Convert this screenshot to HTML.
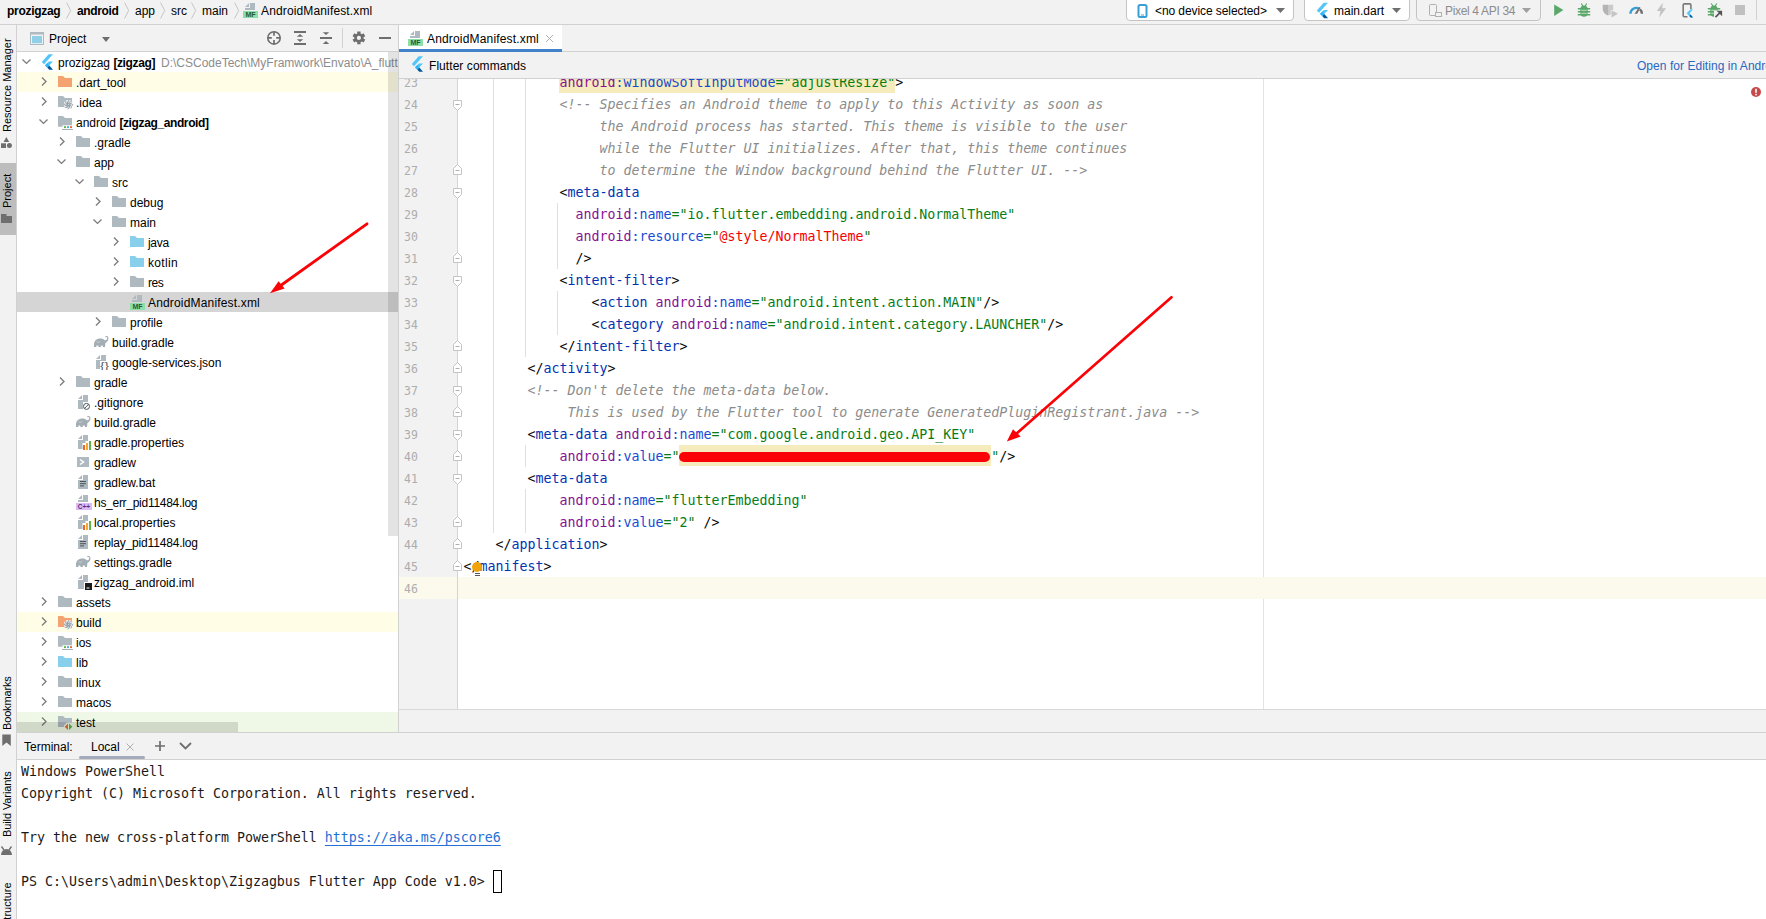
<!DOCTYPE html><html><head><meta charset="utf-8"><title>AndroidManifest.xml</title><style>
*{box-sizing:border-box}
html,body{margin:0;padding:0}
body{width:1766px;height:919px;overflow:hidden;position:relative;background:#fff;font-family:"Liberation Sans", sans-serif;font-size:12px;color:#000}
.abs{position:absolute}
.t{position:absolute;white-space:pre;line-height:20px;height:20px}
b{letter-spacing:-0.38px}
#nav{left:0;top:0;width:1766px;height:25px;background:#f2f2f2;border-bottom:1px solid #d1d1d1}
#strip{left:0;top:25px;width:17px;height:894px;background:#f2f2f2;border-right:1px solid #d1d1d1}
#phead{left:17px;top:25px;width:382px;height:27px;background:#f2f2f2;border-bottom:1px solid #d1d1d1}
#tree{left:17px;top:52px;width:381px;height:680px;background:#fff;overflow:hidden}
.row{position:absolute;left:0;width:381px;height:20px}
.row .t{top:1px}
.ic{position:absolute;width:16px;height:16px;top:2px}
.vt{position:absolute;white-space:pre;transform-origin:0 0;transform:rotate(-90deg);line-height:16px;height:16px;font-size:11px}
#ed{left:399px;top:25px;width:1367px;height:707px;background:#fff}
.code{position:absolute;white-space:pre;font-family:"DejaVu Sans Mono", "Liberation Mono", monospace;font-size:13.29px;line-height:22px;height:22px}
.ln{position:absolute;left:0;width:30px;font-family:"DejaVu Sans Mono", "Liberation Mono", monospace;font-size:11.500px;line-height:22px;height:22px;color:#adadad;text-align:left}
.tg{color:#0033b3} .ns{color:#871094} .an{color:#174ad4} .av{color:#067d17} .cm{color:#8c8c8c;font-style:italic} .br{color:#080808} .er{color:#f50000}
</style></head><body><div id="nav" class="abs">
<span class="t" style="left:7px;top:1px;font-weight:bold;letter-spacing:-0.3px">prozigzag</span>
<svg class="abs" style="left:66px;top:2px" width="6" height="17" viewBox="0 0 6 17"><path d="M0.500 0.500L4.700 8.500L0.500 16.500" fill="none" stroke="#c6c6c6" stroke-width="1"/></svg>
<span class="t" style="left:77px;top:1px;font-weight:bold;letter-spacing:-0.35px">android</span>
<svg class="abs" style="left:124px;top:2px" width="6" height="17" viewBox="0 0 6 17"><path d="M0.500 0.500L4.700 8.500L0.500 16.500" fill="none" stroke="#c6c6c6" stroke-width="1"/></svg>
<span class="t" style="left:135px;top:1px">app</span>
<svg class="abs" style="left:160px;top:2px" width="6" height="17" viewBox="0 0 6 17"><path d="M0.500 0.500L4.700 8.500L0.500 16.500" fill="none" stroke="#c6c6c6" stroke-width="1"/></svg>
<span class="t" style="left:171px;top:1px">src</span>
<svg class="abs" style="left:191px;top:2px" width="6" height="17" viewBox="0 0 6 17"><path d="M0.500 0.500L4.700 8.500L0.500 16.500" fill="none" stroke="#c6c6c6" stroke-width="1"/></svg>
<span class="t" style="left:202px;top:1px">main</span>
<svg class="abs" style="left:234px;top:2px" width="6" height="17" viewBox="0 0 6 17"><path d="M0.500 0.500L4.700 8.500L0.500 16.500" fill="none" stroke="#c6c6c6" stroke-width="1"/></svg>
<svg class="ic" style="left:243px;top:2px" viewBox="0 0 16 16"><path d="M7 1h5v7H2V6h5z M6 1L2 5h4z" fill="#aeb9c0"/><rect x="0" y="9" width="15" height="7" fill="#8fdeaa"/><text x="7.500" y="15.200" font-family="Liberation Sans, sans-serif" font-size="7" font-weight="bold" text-anchor="middle" fill="#1f5c36">MF</text></svg>
<span class="t" style="left:261px;top:1px;letter-spacing:0.14px">AndroidManifest.xml</span>
<div class="abs" style="left:1126px;top:-4px;width:168px;height:25px;background:#fff;border:1px solid #c4c4c4;border-radius:4px"></div>
<svg class="abs" style="left:1135px;top:3px" width="16" height="16" viewBox="0 0 16 16"><rect x="3.500" y="2" width="8" height="12" rx="1.500" fill="#fff" stroke="#389fd6" stroke-width="2"/><rect x="6" y="11.500" width="3" height="1" fill="#389fd6"/></svg>
<span class="t" style="left:1155px;top:1px;letter-spacing:-0.08px">&lt;no device selected&gt;</span>
<svg class="abs" style="left:1276px;top:8px" width="9" height="5" viewBox="0 0 9 5"><path d="M0 0h9L4.500 5z" fill="#6e6e6e"/></svg>
<div class="abs" style="left:1304px;top:-4px;width:106px;height:25px;background:#fff;border:1px solid #c4c4c4;border-radius:4px"></div>
<svg class="abs" width="16" height="17" style="left:1314px;top:2px" viewBox="0 0 16 16"><path d="M9.700 .2H14L5 10.200 2.800 7.900z" fill="#54c5f8"/><path d="M9.700 7.400H14L8.200 13.600 6 11.400z" fill="#54c5f8"/><path d="M8.200 13.600l2 2.200H14l-3.700-4.400z" fill="#01579b"/><path d="M6 11.400l2.200-2.300 2.100 2.300-2.100 2.200z" fill="#29b6f6"/></svg>
<span class="t" style="left:1334px;top:1px">main.dart</span>
<svg class="abs" style="left:1392px;top:8px" width="9" height="5" viewBox="0 0 9 5"><path d="M0 0h9L4.500 5z" fill="#6e6e6e"/></svg>
<div class="abs" style="left:1416px;top:-4px;width:125px;height:25px;background:#f2f2f2;border:1px solid #c4c4c4;border-radius:4px"></div>
<svg class="abs" style="left:1427px;top:2px" width="16" height="16" viewBox="0 0 16 16"><rect x="2.500" y="2.500" width="7" height="11" rx="1" fill="none" stroke="#b0b0b0" stroke-width="1"/><rect x="8.500" y="10.500" width="6" height="4" fill="#f2f2f2" stroke="#b0b0b0" stroke-width="1"/></svg>
<span class="t" style="left:1445px;top:1px;color:#8c8c8c;letter-spacing:-0.33px">Pixel 4 API 34</span>
<svg class="abs" style="left:1522px;top:8px" width="9" height="5" viewBox="0 0 9 5"><path d="M0 0h9L4.500 5z" fill="#a0a0a0"/></svg>
<svg class="abs" style="left:1550px;top:2px;overflow:visible" width="16" height="16" viewBox="0 0 16 16"><path d="M4.200 2.400L13.400 8.100L4.200 13.900z" fill="#59a869"/></svg>
<svg class="abs" style="left:1576px;top:2px;overflow:visible" width="16" height="16" viewBox="0 0 16 16"><path d="M5.200 1.500l1.700 2.500M10.800 1.500L9.100 4" stroke="#59a869" stroke-width="1.200" fill="none"/><path d="M1.800 6.800h12.400M1.800 9.800h12.400M1.800 12.800h12.400" stroke="#59a869" stroke-width="1.500" fill="none"/><path d="M4.300 7.300a3.700 3.900 0 0 1 7.400 0v3.500a3.700 3.900 0 0 1-7.400 0z" fill="#59a869"/><path d="M5.300 8.300h5.400M5.300 11.300h5.400" stroke="#d4ead8" stroke-width=".8" fill="none"/></svg>
<svg class="abs" style="left:1602px;top:2px;overflow:visible" width="16" height="16" viewBox="0 0 16 16"><path d="M.7 2.700h5.300v10.900C3 12.300.7 10 .7 7z" fill="#b4b4b4"/><path d="M6 2.700h5.200V8H8.800v4.600c-.9.500-1.800.8-2.800 1z" fill="#cacaca"/><path d="M9.500 8.300l6.500 3.500-6.500 3.600z" fill="#c4c4c4"/></svg>
<svg class="abs" style="left:1628px;top:2px;overflow:visible" width="16" height="16" viewBox="0 0 16 16"><path d="M1.200 11.700a7 7 0 0 1 10.500-6l-1.200 2a4.600 4.600 0 0 0-6.900 4z" fill="#389fd6"/><path d="M12.800 6.500a7 7 0 0 1 2.300 5.200h-2.400a4.600 4.600 0 0 0-1.500-3.400z" fill="#6e6e6e"/><path d="M6.500 11.700L11.300 5l1.200.8-3.300 5.900z" fill="#6e6e6e"/></svg>
<svg class="abs" style="left:1654px;top:2px;overflow:visible" width="16" height="16" viewBox="0 0 16 16"><path d="M8.800 .7L2.800 9h3.700l-1.500 6.400L12.200 6.300H8.200z" fill="#c4c4c4"/></svg>
<svg class="abs" style="left:1680px;top:2px;overflow:visible" width="16" height="16" viewBox="0 0 16 16"><path d="M10.900 7V2.900a1 1 0 0 0-1-1H4.200a1 1 0 0 0-1 1v10.800a1 1 0 0 0 1 1h3.300" fill="none" stroke="#7a7a7a" stroke-width="1.600"/><path d="M10.600 7.300L6.700 11.200l3.900 4.400h2.400l-2.300-2.800L13 10.500 10.900 12.400 9.600 11.200 13 7.300z" fill="#54c5f8"/><path d="M9.300 13.900l1.500 1.700H13l-2.300-2.800z" fill="#01579b"/></svg>
<svg class="abs" style="left:1706px;top:2px;overflow:visible" width="16" height="16" viewBox="0 0 16 16"><path d="M5.200 1.500l1.700 2.500M10.800 1.500L9.100 4" stroke="#59a869" stroke-width="1.200" fill="none"/><path d="M1.800 6.800h12.400M1.800 9.800h12.400M1.800 12.800h12.400" stroke="#59a869" stroke-width="1.500" fill="none"/><path d="M4.300 7.300a3.700 3.900 0 0 1 7.400 0v3.500a3.700 3.900 0 0 1-7.400 0z" fill="#59a869"/><path d="M5.300 8.300h5.400M5.300 11.300h5.400" stroke="#d4ead8" stroke-width=".8" fill="none"/><path d="M8 8.600h9v8H8z" fill="#f2f2f2"/><path d="M9.500 15.200l5.300-5.300" stroke="#555" stroke-width="1.700" fill="none"/><path d="M10.600 8.800h5.500v5.500z" fill="#555"/></svg>
<svg class="abs" style="left:1732px;top:2px;overflow:visible" width="16" height="16" viewBox="0 0 16 16"><rect x="3" y="3" width="10" height="10" fill="#c0c0c0"/></svg>
<div class="abs" style="left:1756px;top:0;width:1px;height:20px;background:#d1d1d1"></div>
</div>
<div id="strip" class="abs"></div>
<div class="abs" style="left:0;top:163px;width:16px;height:72px;background:#bdbdbd"></div>
<span class="vt" style="left:-1px;top:132px;letter-spacing:0px">Resource Manager</span>
<span class="vt" style="left:-1px;top:208px;letter-spacing:0px">Project</span>
<span class="vt" style="left:-1px;top:730px;letter-spacing:-0.15px">Bookmarks</span>
<span class="vt" style="left:-1px;top:837px;letter-spacing:-0.1px">Build Variants</span>
<span class="vt" style="left:-1px;top:927px;letter-spacing:0px">Structure</span>
<svg class="abs" style="left:0px;top:136px" width="16" height="14" viewBox="0 0 16 14"><path d="M6.400 1L9.200 6H3.600z" fill="#6e6e6e"/><rect x="1" y="7.300" width="5" height="4.700" fill="#6e6e6e"/><circle cx="9.400" cy="9.600" r="2.500" fill="#6e6e6e"/></svg>
<svg class="abs" style="left:0px;top:212px" width="16" height="14" viewBox="0 0 16 14"><path d="M1 2h5.500v2H12v7H1z" fill="#6e6e6e"/></svg>
<svg class="abs" style="left:0px;top:733px" width="16" height="14" viewBox="0 0 16 14"><path d="M2.300 1.500h8.500v11.500L6.500 9.500 2.300 13z" fill="#6e6e6e"/></svg>
<svg class="abs" style="left:0px;top:843px" width="16" height="14" viewBox="0 0 16 14"><path d="M1 12a5.500 6 0 0 1 11 0z" fill="#6e6e6e"/><path d="M1.500 3.500l2.500 3.500M11.500 3.500l-2.500 3.500" stroke="#6e6e6e" stroke-width="1.300"/></svg>
<div id="phead" class="abs">
<svg class="abs" style="left:13px;top:7px" width="14" height="14" viewBox="0 0 14 14"><rect x=".5" y=".5" width="13" height="12" fill="#f2f2f2" stroke="#aeb9c0"/><rect x="0" y="0" width="14" height="2.500" fill="#aeb9c0"/><rect x="2" y="4" width="10" height="7.200" fill="#8fcfe8"/></svg>
<span class="t" style="left:32px;top:4px">Project</span>
<svg class="abs" style="left:85px;top:12px" width="8" height="5" viewBox="0 0 8 5"><path d="M0 0h8L4 5z" fill="#6e6e6e"/></svg>
<svg class="abs" style="left:0;top:0" width="382" height="27" viewBox="0 0 382 27"><circle cx="257" cy="12.900" r="6.200" fill="none" stroke="#6e6e6e" stroke-width="1.600"/><path d="M257 6.700v4M257 15.100v4M250.800 12.900h4M259.200 12.900h4" stroke="#6e6e6e" stroke-width="1.700"/><rect x="277" y="6" width="12" height="2" fill="#6e6e6e"/><rect x="277" y="18" width="12" height="2" fill="#6e6e6e"/><path d="M283 9l3.200 2.700h-6.400zM283 17l3.200-2.700h-6.400z" fill="#6e6e6e"/><rect x="303" y="12" width="12" height="2" fill="#6e6e6e"/><path d="M309 10l3.200-2.700h-6.400zM309 16l3.200 2.900h-6.400z" fill="#6e6e6e"/><rect x="325" y="3" width="1" height="20" fill="#d1d1d1"/><path d="M340.24 8.50L340.20 6.52L343.60 6.52L343.56 8.50L344.88 9.27L346.58 8.24L348.27 11.18L346.54 12.13L346.54 13.67L348.27 14.62L346.58 17.56L344.88 16.53L343.56 17.30L343.60 19.28L340.20 19.28L340.24 17.30L338.92 16.53L337.22 17.56L335.53 14.62L337.26 13.67L337.26 12.13L335.53 11.18L337.22 8.24L338.92 9.27z" fill="#6e6e6e"/><circle cx="341.900" cy="12.900" r="2.100" fill="#f2f2f2"/><rect x="362" y="12" width="12" height="2" fill="#6e6e6e"/></svg>
</div>
<div id="tree" class="abs">
<div class="row" style="top:0px;">
<svg class="ic" style="left:2px" viewBox="0 0 16 16"><path d="M3.500 5.400l4 4 4-4" fill="none" stroke="#7d7d7d" stroke-width="1.350"/></svg>
<svg class="ic" style="left:22px;top:2px" viewBox="0 0 16 16"><path d="M9.700 .2H14L5 10.200 2.800 7.900z" fill="#54c5f8"/><path d="M9.700 7.400H14L8.200 13.600 6 11.400z" fill="#54c5f8"/><path d="M8.200 13.600l2 2.200H14l-3.700-4.400z" fill="#01579b"/><path d="M6 11.400l2.200-2.300 2.100 2.300-2.100 2.200z" fill="#29b6f6"/></svg>
<span class="t" style="left:41px">prozigzag <b>[zigzag]</b><span style="color:#8c8c8c;margin-left:6px">D:\CSCodeTech\MyFramwork\Envato\A_flutt</span></span>
</div>
<div class="row" style="top:20px;background:#fffde6;">
<svg class="ic" style="left:19px" viewBox="0 0 16 16"><path d="M6 3.400l4 4-4 4" fill="none" stroke="#7d7d7d" stroke-width="1.350"/></svg>
<svg class="ic" style="left:41px" viewBox="0 0 16 16"><path d="M0 2h5l2 2h7v9H0z" fill="#f4a26f"/></svg>
<span class="t" style="left:59px">.dart_tool</span>
</div>
<div class="row" style="top:40px;">
<svg class="ic" style="left:19px" viewBox="0 0 16 16"><path d="M6 3.400l4 4-4 4" fill="none" stroke="#7d7d7d" stroke-width="1.350"/></svg>
<svg class="ic" style="left:41px" viewBox="0 0 16 16"><path d="M0 2h5l2 2h7v9H0z" fill="#aeb9c0"/><circle cx="10.500" cy="10.600" r="4.600" fill="#fff"/><path d="M11.40 10.60Q13.66 11.24 13.17 13.97M11.14 11.24Q12.28 13.29 10.01 14.87M10.50 11.50Q9.86 13.76 7.13 13.27M9.86 11.24Q7.81 12.38 6.23 10.11M9.60 10.60Q7.34 9.96 7.83 7.23M9.86 9.96Q8.72 7.91 10.99 6.33M10.50 9.70Q11.14 7.44 13.87 7.93M11.14 9.96Q13.19 8.82 14.77 11.09" fill="none" stroke="#97a3ab" stroke-width="1.050" stroke-linecap="round"/></svg>
<span class="t" style="left:59px">.idea</span>
</div>
<div class="row" style="top:60px;">
<svg class="ic" style="left:19px" viewBox="0 0 16 16"><path d="M3.500 5.400l4 4 4-4" fill="none" stroke="#7d7d7d" stroke-width="1.350"/></svg>
<svg class="ic" style="left:41px" viewBox="0 0 16 16"><path d="M0 2h5l2 2h7v8.800H0z" fill="#aeb9c0"/><rect x="4.500" y="11.300" width="11" height="4" fill="#fff"/><rect x="6" y="12.200" width="2" height="1.900" fill="#62b543"/><rect x="9" y="12.200" width="2" height="1.900" fill="#40b6e0"/><rect x="12" y="12.200" width="2" height="1.900" fill="#f26522"/><rect x="4" y="15" width="11" height=".9" fill="#9aa7b0"/></svg>
<span class="t" style="left:59px">android <b>[zigzag_android]</b></span>
</div>
<div class="row" style="top:80px;">
<svg class="ic" style="left:37px" viewBox="0 0 16 16"><path d="M6 3.400l4 4-4 4" fill="none" stroke="#7d7d7d" stroke-width="1.350"/></svg>
<svg class="ic" style="left:59px" viewBox="0 0 16 16"><path d="M0 2h5l2 2h7v9H0z" fill="#aeb9c0"/></svg>
<span class="t" style="left:77px">.gradle</span>
</div>
<div class="row" style="top:100px;">
<svg class="ic" style="left:37px" viewBox="0 0 16 16"><path d="M3.500 5.400l4 4 4-4" fill="none" stroke="#7d7d7d" stroke-width="1.350"/></svg>
<svg class="ic" style="left:59px" viewBox="0 0 16 16"><path d="M0 2h5l2 2h7v9H0z" fill="#aeb9c0"/></svg>
<span class="t" style="left:77px">app</span>
</div>
<div class="row" style="top:120px;">
<svg class="ic" style="left:55px" viewBox="0 0 16 16"><path d="M3.500 5.400l4 4 4-4" fill="none" stroke="#7d7d7d" stroke-width="1.350"/></svg>
<svg class="ic" style="left:77px" viewBox="0 0 16 16"><path d="M0 2h5l2 2h7v9H0z" fill="#aeb9c0"/></svg>
<span class="t" style="left:95px">src</span>
</div>
<div class="row" style="top:140px;">
<svg class="ic" style="left:73px" viewBox="0 0 16 16"><path d="M6 3.400l4 4-4 4" fill="none" stroke="#7d7d7d" stroke-width="1.350"/></svg>
<svg class="ic" style="left:95px" viewBox="0 0 16 16"><path d="M0 2h5l2 2h7v9H0z" fill="#aeb9c0"/></svg>
<span class="t" style="left:113px">debug</span>
</div>
<div class="row" style="top:160px;">
<svg class="ic" style="left:73px" viewBox="0 0 16 16"><path d="M3.500 5.400l4 4 4-4" fill="none" stroke="#7d7d7d" stroke-width="1.350"/></svg>
<svg class="ic" style="left:95px" viewBox="0 0 16 16"><path d="M0 2h5l2 2h7v9H0z" fill="#aeb9c0"/></svg>
<span class="t" style="left:113px">main</span>
</div>
<div class="row" style="top:180px;">
<svg class="ic" style="left:91px" viewBox="0 0 16 16"><path d="M6 3.400l4 4-4 4" fill="none" stroke="#7d7d7d" stroke-width="1.350"/></svg>
<svg class="ic" style="left:113px" viewBox="0 0 16 16"><path d="M0 2h5l2 2h7v9H0z" fill="#87cfeb"/></svg>
<span class="t" style="left:131px"><span style="letter-spacing:-0.3px">java</span></span>
</div>
<div class="row" style="top:200px;">
<svg class="ic" style="left:91px" viewBox="0 0 16 16"><path d="M6 3.400l4 4-4 4" fill="none" stroke="#7d7d7d" stroke-width="1.350"/></svg>
<svg class="ic" style="left:113px" viewBox="0 0 16 16"><path d="M0 2h5l2 2h7v9H0z" fill="#87cfeb"/></svg>
<span class="t" style="left:131px"><span style="letter-spacing:0.35px">kotlin</span></span>
</div>
<div class="row" style="top:220px;">
<svg class="ic" style="left:91px" viewBox="0 0 16 16"><path d="M6 3.400l4 4-4 4" fill="none" stroke="#7d7d7d" stroke-width="1.350"/></svg>
<svg class="ic" style="left:113px" viewBox="0 0 16 16"><path d="M0 2h5l2 2h7v9H0z" fill="#aeb9c0"/></svg>
<span class="t" style="left:131px"><span style="letter-spacing:-0.5px">res</span></span>
</div>
<div class="row" style="top:240px;background:#d5d5d5;">
<svg class="ic" style="left:113px;top:2px" viewBox="0 0 16 16"><path d="M7 1h5v7H2V6h5z M6 1L2 5h4z" fill="#aeb9c0"/><rect x="0" y="9" width="15" height="7" fill="#8fdeaa"/><text x="7.500" y="15.200" font-family="Liberation Sans, sans-serif" font-size="7" font-weight="bold" text-anchor="middle" fill="#1f5c36">MF</text></svg>
<span class="t" style="left:131px"><span style="letter-spacing:0.17px">AndroidManifest.xml</span></span>
</div>
<div class="row" style="top:260px;">
<svg class="ic" style="left:73px" viewBox="0 0 16 16"><path d="M6 3.400l4 4-4 4" fill="none" stroke="#7d7d7d" stroke-width="1.350"/></svg>
<svg class="ic" style="left:95px" viewBox="0 0 16 16"><path d="M0 2h5l2 2h7v9H0z" fill="#aeb9c0"/></svg>
<span class="t" style="left:113px">profile</span>
</div>
<div class="row" style="top:280px;">
<svg class="ic" style="left:77px" viewBox="0 0 16 16"><path d="M0 13C-.6 9 1 5.200 5 4.600c2.500-.4 4.600.3 5.800 1.700 1.400.1 2.500-.9 2.400-2.300-.1-1-1-1.300-1.600-.7l-.7-.7c1-1.100 3.200-.9 3.500 1.200.4 2.600-1.400 4.600-3 5.100L11 13H9l-.3-1.600H7L6.700 13H4.500l-.3-1.600H2.500L2.200 13z" fill="#a3adb4"/><path d="M2.500 7.500c1.200 1.200 2.600.8 3.800-.2" stroke="#d5dadd" stroke-width=".8" fill="none"/></svg>
<span class="t" style="left:95px">build.gradle</span>
</div>
<div class="row" style="top:300px;">
<svg class="ic" style="left:77px" viewBox="0 0 16 16"><path d="M7 1h5v6H6v8H2V6h5z M6 1L2 5h4z" fill="#aeb9c0"/><text x="10.500" y="14.800" font-family="Liberation Sans, sans-serif" font-size="9" text-anchor="middle" fill="#4d5358" textLength="9" lengthAdjust="spacingAndGlyphs">{}</text></svg>
<span class="t" style="left:95px">google-services.json</span>
</div>
<div class="row" style="top:320px;">
<svg class="ic" style="left:37px" viewBox="0 0 16 16"><path d="M6 3.400l4 4-4 4" fill="none" stroke="#7d7d7d" stroke-width="1.350"/></svg>
<svg class="ic" style="left:59px" viewBox="0 0 16 16"><path d="M0 2h5l2 2h7v9H0z" fill="#aeb9c0"/></svg>
<span class="t" style="left:77px">gradle</span>
</div>
<div class="row" style="top:340px;">
<svg class="ic" style="left:59px" viewBox="0 0 16 16"><path d="M7 1h5v7H7v7H2V6h5z M6 1L2 5h4z" fill="#aeb9c0"/><circle cx="10.500" cy="12.400" r="3" fill="#fff" stroke="#4d5358" stroke-width="1"/><path d="M8.500 14.400l4-4" stroke="#4d5358" stroke-width="1"/></svg>
<span class="t" style="left:77px">.gitignore</span>
</div>
<div class="row" style="top:360px;">
<svg class="ic" style="left:59px" viewBox="0 0 16 16"><path d="M0 13C-.6 9 1 5.200 5 4.600c2.500-.4 4.600.3 5.800 1.700 1.400.1 2.500-.9 2.400-2.300-.1-1-1-1.300-1.600-.7l-.7-.7c1-1.100 3.200-.9 3.500 1.200.4 2.600-1.400 4.600-3 5.100L11 13H9l-.3-1.600H7L6.700 13H4.500l-.3-1.600H2.500L2.200 13z" fill="#a3adb4"/><path d="M2.500 7.500c1.200 1.200 2.600.8 3.800-.2" stroke="#d5dadd" stroke-width=".8" fill="none"/></svg>
<span class="t" style="left:77px">build.gradle</span>
</div>
<div class="row" style="top:380px;">
<svg class="ic" style="left:59px" viewBox="0 0 16 16"><path d="M7 1h5v6H9.500v2H6.500v6H2V6h5z M6 1L2 5h4z" fill="#aeb9c0"/><rect x="7" y="11" width="2" height="5" fill="#f26522"/><rect x="10" y="9" width="2" height="7" fill="#f4a63c"/><rect x="13" y="7" width="2" height="9" fill="#62b543"/></svg>
<span class="t" style="left:77px">gradle.properties</span>
</div>
<div class="row" style="top:400px;">
<svg class="ic" style="left:59px" viewBox="0 0 16 16"><rect x="1" y="3" width="12" height="10" fill="#aeb9c0"/><path d="M4 5.500L7.500 8L4 10.500" fill="none" stroke="#fff" stroke-width="1.500"/></svg>
<span class="t" style="left:77px">gradlew</span>
</div>
<div class="row" style="top:420px;">
<svg class="ic" style="left:59px" viewBox="0 0 16 16"><path d="M7 1h5v14H2V6h5z M6 1L2 5h4z" fill="#aeb9c0"/><rect x="4" y="7" width="6" height="1" fill="#4d5358"/><rect x="4" y="9.200" width="6" height="1" fill="#4d5358"/><rect x="4" y="11.400" width="4" height="1" fill="#4d5358"/></svg>
<span class="t" style="left:77px">gradlew.bat</span>
</div>
<div class="row" style="top:440px;">
<svg class="ic" style="left:59px" viewBox="0 0 16 16"><path d="M7 1h5v7H2V6h5z M6 1L2 5h4z" fill="#aeb9c0"/><rect x="0" y="9" width="16" height="7" fill="#dcbcf2"/><text x="8" y="14.800" font-family="Liberation Sans, sans-serif" font-size="6.500" font-weight="bold" text-anchor="middle" fill="#5a2d82">C++</text></svg>
<span class="t" style="left:77px"><span style="letter-spacing:-0.28px">hs_err_pid11484.log</span></span>
</div>
<div class="row" style="top:460px;">
<svg class="ic" style="left:59px" viewBox="0 0 16 16"><path d="M7 1h5v6H9.500v2H6.500v6H2V6h5z M6 1L2 5h4z" fill="#aeb9c0"/><rect x="7" y="11" width="2" height="5" fill="#f26522"/><rect x="10" y="9" width="2" height="7" fill="#f4a63c"/><rect x="13" y="7" width="2" height="9" fill="#62b543"/></svg>
<span class="t" style="left:77px">local.properties</span>
</div>
<div class="row" style="top:480px;">
<svg class="ic" style="left:59px" viewBox="0 0 16 16"><path d="M7 1h5v14H2V6h5z M6 1L2 5h4z" fill="#aeb9c0"/><rect x="4" y="7" width="6" height="1" fill="#4d5358"/><rect x="4" y="9.200" width="6" height="1" fill="#4d5358"/><rect x="4" y="11.400" width="4" height="1" fill="#4d5358"/></svg>
<span class="t" style="left:77px"><span style="letter-spacing:-0.18px">replay_pid11484.log</span></span>
</div>
<div class="row" style="top:500px;">
<svg class="ic" style="left:59px" viewBox="0 0 16 16"><path d="M0 13C-.6 9 1 5.200 5 4.600c2.500-.4 4.600.3 5.800 1.700 1.400.1 2.500-.9 2.400-2.300-.1-1-1-1.300-1.600-.7l-.7-.7c1-1.100 3.200-.9 3.500 1.200.4 2.600-1.400 4.600-3 5.100L11 13H9l-.3-1.600H7L6.700 13H4.500l-.3-1.600H2.500L2.200 13z" fill="#a3adb4"/><path d="M2.500 7.500c1.200 1.200 2.600.8 3.800-.2" stroke="#d5dadd" stroke-width=".8" fill="none"/></svg>
<span class="t" style="left:77px">settings.gradle</span>
</div>
<div class="row" style="top:520px;">
<svg class="ic" style="left:59px" viewBox="0 0 16 16"><path d="M7 1h5v7H8v7H2V6h5z M6 1L2 5h4z" fill="#aeb9c0"/><rect x="9" y="9" width="7" height="7" fill="#1a1a1a"/><rect x="10.500" y="13.500" width="3" height="1" fill="#fff"/></svg>
<span class="t" style="left:77px">zigzag_android.iml</span>
</div>
<div class="row" style="top:540px;">
<svg class="ic" style="left:19px" viewBox="0 0 16 16"><path d="M6 3.400l4 4-4 4" fill="none" stroke="#7d7d7d" stroke-width="1.350"/></svg>
<svg class="ic" style="left:41px" viewBox="0 0 16 16"><path d="M0 2h5l2 2h7v9H0z" fill="#aeb9c0"/></svg>
<span class="t" style="left:59px">assets</span>
</div>
<div class="row" style="top:560px;background:#fffde6;">
<svg class="ic" style="left:19px" viewBox="0 0 16 16"><path d="M6 3.400l4 4-4 4" fill="none" stroke="#7d7d7d" stroke-width="1.350"/></svg>
<svg class="ic" style="left:41px" viewBox="0 0 16 16"><path d="M0 2h5l2 2h7v9H0z" fill="#f4a26f"/><circle cx="10.500" cy="10.600" r="4.600" fill="#fff"/><path d="M11.40 10.60Q13.66 11.24 13.17 13.97M11.14 11.24Q12.28 13.29 10.01 14.87M10.50 11.50Q9.86 13.76 7.13 13.27M9.86 11.24Q7.81 12.38 6.23 10.11M9.60 10.60Q7.34 9.96 7.83 7.23M9.86 9.96Q8.72 7.91 10.99 6.33M10.50 9.70Q11.14 7.44 13.87 7.93M11.14 9.96Q13.19 8.82 14.77 11.09" fill="none" stroke="#97a3ab" stroke-width="1.050" stroke-linecap="round"/></svg>
<span class="t" style="left:59px">build</span>
</div>
<div class="row" style="top:580px;">
<svg class="ic" style="left:19px" viewBox="0 0 16 16"><path d="M6 3.400l4 4-4 4" fill="none" stroke="#7d7d7d" stroke-width="1.350"/></svg>
<svg class="ic" style="left:41px" viewBox="0 0 16 16"><path d="M0 2h5l2 2h7v8.800H0z" fill="#aeb9c0"/><rect x="4.500" y="11.300" width="11" height="4" fill="#fff"/><rect x="6" y="12.200" width="2" height="1.900" fill="#62b543"/><rect x="9" y="12.200" width="2" height="1.900" fill="#40b6e0"/><rect x="12" y="12.200" width="2" height="1.900" fill="#f26522"/><rect x="4" y="15" width="11" height=".9" fill="#9aa7b0"/></svg>
<span class="t" style="left:59px">ios</span>
</div>
<div class="row" style="top:600px;">
<svg class="ic" style="left:19px" viewBox="0 0 16 16"><path d="M6 3.400l4 4-4 4" fill="none" stroke="#7d7d7d" stroke-width="1.350"/></svg>
<svg class="ic" style="left:41px" viewBox="0 0 16 16"><path d="M0 2h5l2 2h7v9H0z" fill="#87cfeb"/></svg>
<span class="t" style="left:59px">lib</span>
</div>
<div class="row" style="top:620px;">
<svg class="ic" style="left:19px" viewBox="0 0 16 16"><path d="M6 3.400l4 4-4 4" fill="none" stroke="#7d7d7d" stroke-width="1.350"/></svg>
<svg class="ic" style="left:41px" viewBox="0 0 16 16"><path d="M0 2h5l2 2h7v9H0z" fill="#aeb9c0"/></svg>
<span class="t" style="left:59px">linux</span>
</div>
<div class="row" style="top:640px;">
<svg class="ic" style="left:19px" viewBox="0 0 16 16"><path d="M6 3.400l4 4-4 4" fill="none" stroke="#7d7d7d" stroke-width="1.350"/></svg>
<svg class="ic" style="left:41px" viewBox="0 0 16 16"><path d="M0 2h5l2 2h7v9H0z" fill="#aeb9c0"/></svg>
<span class="t" style="left:59px">macos</span>
</div>
<div class="row" style="top:660px;background:#eff8e6;">
<svg class="ic" style="left:19px" viewBox="0 0 16 16"><path d="M6 3.400l4 4-4 4" fill="none" stroke="#7d7d7d" stroke-width="1.350"/></svg>
<svg class="ic" style="left:41px" viewBox="0 0 16 16"><path d="M0 2h5l2 2h7v4.500H9l-3 3v1.500H0z" fill="#aeb9c0"/><path d="M10 9.500v6.500L6.600 12.750z" fill="#e8703a"/><path d="M11 9.500v6.500l3.400-3.250z" fill="#62b543"/></svg>
<span class="t" style="left:59px">test</span>
</div>
<div class="abs" style="left:371px;top:0;width:10px;height:484px;background:rgba(0,0,0,.11)"></div>
<div class="abs" style="left:0;top:670px;width:221px;height:10px;background:rgba(0,0,0,.13)"></div>
</div>
<div class="abs" style="left:398px;top:25px;width:1px;height:707px;background:#d1d1d1"></div>
<div id="ed" class="abs">
<div class="abs" style="left:0;top:0;width:1367px;height:27px;background:#f2f2f2;border-bottom:1px solid #d1d1d1"></div>
<div class="abs" style="left:0;top:0;width:163px;height:27px;background:#fff;border-bottom:3px solid #4083c9"></div>
<svg class="ic" style="left:9px;top:5px" viewBox="0 0 16 16"><path d="M7 1h5v7H2V6h5z M6 1L2 5h4z" fill="#aeb9c0"/><rect x="0" y="9" width="15" height="7" fill="#8fdeaa"/><text x="7.500" y="15.200" font-family="Liberation Sans, sans-serif" font-size="7" font-weight="bold" text-anchor="middle" fill="#1f5c36">MF</text></svg>
<span class="t" style="left:28px;top:4px;letter-spacing:0.17px">AndroidManifest.xml</span>
<svg class="abs" style="left:146px;top:9px" width="9" height="9" viewBox="0 0 9 9"><path d="M1 1l7 7M8 1L1 8" stroke="#b0b0b0" stroke-width="1"/></svg>
<div class="abs" style="left:0;top:27px;width:1367px;height:27px;background:#f2f2f2;border-bottom:1px solid #d1d1d1"></div>
<svg class="abs" width="16" height="16" style="left:10px;top:31px" viewBox="0 0 16 16"><path d="M9.700 .2H14L5 10.200 2.800 7.900z" fill="#54c5f8"/><path d="M9.700 7.400H14L8.200 13.600 6 11.400z" fill="#54c5f8"/><path d="M8.200 13.600l2 2.200H14l-3.700-4.400z" fill="#01579b"/><path d="M6 11.400l2.200-2.300 2.100 2.300-2.100 2.200z" fill="#29b6f6"/></svg>
<span class="t" style="left:30px;top:31px;letter-spacing:0.06px">Flutter commands</span>
<span class="t" style="left:1238px;top:31px;color:#2b68c0;letter-spacing:0.04px">Open for Editing in Android Studio</span>
<div class="abs" style="left:0;top:54px;width:1367px;height:630px;overflow:hidden;background:#fff">
<div class="abs" style="left:0;top:0;width:58px;height:630px;background:#f2f2f2"></div>
<div class="abs" style="left:58px;top:0;width:1px;height:630px;background:#d4d4d4"></div>
<div class="abs" style="left:864px;top:0;width:1px;height:630px;background:#e3e3e3"></div>
<div class="abs" style="left:0px;top:498px;width:58px;height:22px;background:#fcfaed"></div>
<div class="abs" style="left:59px;top:498px;width:1308px;height:22px;background:#fcfaed"></div>
<div class="abs" style="left:280px;top:366px;width:312px;height:21px;background:#f6ebbc"></div>
<div class="abs" style="left:160px;top:0px;width:336px;height:14px;background:#f6ebbc"></div>
<div class="abs" style="left:94px;top:0px;width:1px;height:454px;background:#e0e0e0"></div>
<div class="abs" style="left:126px;top:0px;width:1px;height:278px;background:#e0e0e0"></div>
<div class="abs" style="left:158px;top:124px;width:1px;height:66px;background:#e0e0e0"></div>
<div class="abs" style="left:158px;top:212px;width:1px;height:44px;background:#e0e0e0"></div>
<div class="abs" style="left:126px;top:366px;width:1px;height:22px;background:#e0e0e0"></div>
<div class="abs" style="left:126px;top:410px;width:1px;height:44px;background:#e0e0e0"></div>
<span class="ln" style="left:5px;top:-7px">23</span>
<span class="code" style="left:160.5px;top:-7px"><span class="ns">android</span><span class="an">:windowSoftInputMode</span><span class="av">="adjustResize"</span><span class="br">&gt;</span></span>
<span class="ln" style="left:5px;top:15px">24</span>
<span class="code" style="left:160.5px;top:15px"><span class="cm">&lt;!-- Specifies an Android theme to apply to this Activity as soon as</span></span>
<span class="ln" style="left:5px;top:37px">25</span>
<span class="code" style="left:200.5px;top:37px"><span class="cm">the Android process has started. This theme is visible to the user</span></span>
<span class="ln" style="left:5px;top:59px">26</span>
<span class="code" style="left:200.5px;top:59px"><span class="cm">while the Flutter UI initializes. After that, this theme continues</span></span>
<span class="ln" style="left:5px;top:81px">27</span>
<span class="code" style="left:200.5px;top:81px"><span class="cm">to determine the Window background behind the Flutter UI. --&gt;</span></span>
<span class="ln" style="left:5px;top:103px">28</span>
<span class="code" style="left:160.5px;top:103px"><span class="br">&lt;</span><span class="tg">meta-data</span></span>
<span class="ln" style="left:5px;top:125px">29</span>
<span class="code" style="left:176.5px;top:125px"><span class="ns">android</span><span class="an">:name</span><span class="av">="io.flutter.embedding.android.NormalTheme"</span></span>
<span class="ln" style="left:5px;top:147px">30</span>
<span class="code" style="left:176.5px;top:147px"><span class="ns">android</span><span class="an">:resource</span><span class="av">="</span><span class="er">@style/NormalTheme</span><span class="av">"</span></span>
<span class="ln" style="left:5px;top:169px">31</span>
<span class="code" style="left:176.5px;top:169px"><span class="br">/&gt;</span></span>
<span class="ln" style="left:5px;top:191px">32</span>
<span class="code" style="left:160.5px;top:191px"><span class="br">&lt;</span><span class="tg">intent-filter</span><span class="br">&gt;</span></span>
<span class="ln" style="left:5px;top:213px">33</span>
<span class="code" style="left:192.5px;top:213px"><span class="br">&lt;</span><span class="tg">action </span><span class="ns">android</span><span class="an">:name</span><span class="av">="android.intent.action.MAIN"</span><span class="br">/&gt;</span></span>
<span class="ln" style="left:5px;top:235px">34</span>
<span class="code" style="left:192.5px;top:235px"><span class="br">&lt;</span><span class="tg">category </span><span class="ns">android</span><span class="an">:name</span><span class="av">="android.intent.category.LAUNCHER"</span><span class="br">/&gt;</span></span>
<span class="ln" style="left:5px;top:257px">35</span>
<span class="code" style="left:160.5px;top:257px"><span class="br">&lt;/</span><span class="tg">intent-filter</span><span class="br">&gt;</span></span>
<span class="ln" style="left:5px;top:279px">36</span>
<span class="code" style="left:128.5px;top:279px"><span class="br">&lt;/</span><span class="tg">activity</span><span class="br">&gt;</span></span>
<span class="ln" style="left:5px;top:301px">37</span>
<span class="code" style="left:128.5px;top:301px"><span class="cm">&lt;!-- Don't delete the meta-data below.</span></span>
<span class="ln" style="left:5px;top:323px">38</span>
<span class="code" style="left:168.5px;top:323px"><span class="cm">This is used by the Flutter tool to generate GeneratedPluginRegistrant.java --&gt;</span></span>
<span class="ln" style="left:5px;top:345px">39</span>
<span class="code" style="left:128.5px;top:345px"><span class="br">&lt;</span><span class="tg">meta-data </span><span class="ns">android</span><span class="an">:name</span><span class="av">="com.google.android.geo.API_KEY"</span></span>
<span class="ln" style="left:5px;top:367px">40</span>
<span class="code" style="left:160.5px;top:367px"><span class="ns">android</span><span class="an">:value</span><span class="av">="</span><span>                                       </span><span class="av">"</span><span class="br">/&gt;</span></span>
<span class="ln" style="left:5px;top:389px">41</span>
<span class="code" style="left:128.5px;top:389px"><span class="br">&lt;</span><span class="tg">meta-data</span></span>
<span class="ln" style="left:5px;top:411px">42</span>
<span class="code" style="left:160.5px;top:411px"><span class="ns">android</span><span class="an">:name</span><span class="av">="flutterEmbedding"</span></span>
<span class="ln" style="left:5px;top:433px">43</span>
<span class="code" style="left:160.5px;top:433px"><span class="ns">android</span><span class="an">:value</span><span class="av">="2"</span><span class="br"> /&gt;</span></span>
<span class="ln" style="left:5px;top:455px">44</span>
<span class="code" style="left:96.5px;top:455px"><span class="br">&lt;/</span><span class="tg">application</span><span class="br">&gt;</span></span>
<span class="ln" style="left:5px;top:477px">45</span>
<span class="code" style="left:64.5px;top:477px"><span class="br">&lt;/</span><span class="tg">manifest</span><span class="br">&gt;</span></span>
<span class="ln" style="left:5px;top:499px">46</span>
<svg class="abs" style="left:54px;top:21px" width="9" height="11" viewBox="0 0 9 11"><path d="M.5 .5h8v6L4.500 10.500.5 6.500z" fill="#fff" stroke="#c4c4c4"/><path d="M2.500 4.500h4" stroke="#b0b0b0"/></svg>
<svg class="abs" style="left:54px;top:85px" width="9" height="11" viewBox="0 0 9 11"><path d="M.5 10.500h8v-6L4.500 .5.5 4.500z" fill="#fff" stroke="#c4c4c4"/><path d="M2.500 6.500h4" stroke="#b0b0b0"/></svg>
<svg class="abs" style="left:54px;top:109px" width="9" height="11" viewBox="0 0 9 11"><path d="M.5 .5h8v6L4.500 10.500.5 6.500z" fill="#fff" stroke="#c4c4c4"/><path d="M2.500 4.500h4" stroke="#b0b0b0"/></svg>
<svg class="abs" style="left:54px;top:173px" width="9" height="11" viewBox="0 0 9 11"><path d="M.5 10.500h8v-6L4.500 .5.5 4.500z" fill="#fff" stroke="#c4c4c4"/><path d="M2.500 6.500h4" stroke="#b0b0b0"/></svg>
<svg class="abs" style="left:54px;top:197px" width="9" height="11" viewBox="0 0 9 11"><path d="M.5 .5h8v6L4.500 10.500.5 6.500z" fill="#fff" stroke="#c4c4c4"/><path d="M2.500 4.500h4" stroke="#b0b0b0"/></svg>
<svg class="abs" style="left:54px;top:261px" width="9" height="11" viewBox="0 0 9 11"><path d="M.5 10.500h8v-6L4.500 .5.5 4.500z" fill="#fff" stroke="#c4c4c4"/><path d="M2.500 6.500h4" stroke="#b0b0b0"/></svg>
<svg class="abs" style="left:54px;top:283px" width="9" height="11" viewBox="0 0 9 11"><path d="M.5 10.500h8v-6L4.500 .5.5 4.500z" fill="#fff" stroke="#c4c4c4"/><path d="M2.500 6.500h4" stroke="#b0b0b0"/></svg>
<svg class="abs" style="left:54px;top:307px" width="9" height="11" viewBox="0 0 9 11"><path d="M.5 .5h8v6L4.500 10.500.5 6.500z" fill="#fff" stroke="#c4c4c4"/><path d="M2.500 4.500h4" stroke="#b0b0b0"/></svg>
<svg class="abs" style="left:54px;top:327px" width="9" height="11" viewBox="0 0 9 11"><path d="M.5 10.500h8v-6L4.500 .5.5 4.500z" fill="#fff" stroke="#c4c4c4"/><path d="M2.500 6.500h4" stroke="#b0b0b0"/></svg>
<svg class="abs" style="left:54px;top:351px" width="9" height="11" viewBox="0 0 9 11"><path d="M.5 .5h8v6L4.500 10.500.5 6.500z" fill="#fff" stroke="#c4c4c4"/><path d="M2.500 4.500h4" stroke="#b0b0b0"/></svg>
<svg class="abs" style="left:54px;top:371px" width="9" height="11" viewBox="0 0 9 11"><path d="M.5 10.500h8v-6L4.500 .5.5 4.500z" fill="#fff" stroke="#c4c4c4"/><path d="M2.500 6.500h4" stroke="#b0b0b0"/></svg>
<svg class="abs" style="left:54px;top:395px" width="9" height="11" viewBox="0 0 9 11"><path d="M.5 .5h8v6L4.500 10.500.5 6.500z" fill="#fff" stroke="#c4c4c4"/><path d="M2.500 4.500h4" stroke="#b0b0b0"/></svg>
<svg class="abs" style="left:54px;top:437px" width="9" height="11" viewBox="0 0 9 11"><path d="M.5 10.500h8v-6L4.500 .5.5 4.500z" fill="#fff" stroke="#c4c4c4"/><path d="M2.500 6.500h4" stroke="#b0b0b0"/></svg>
<svg class="abs" style="left:54px;top:459px" width="9" height="11" viewBox="0 0 9 11"><path d="M.5 10.500h8v-6L4.500 .5.5 4.500z" fill="#fff" stroke="#c4c4c4"/><path d="M2.500 6.500h4" stroke="#b0b0b0"/></svg>
<svg class="abs" style="left:54px;top:481px" width="9" height="11" viewBox="0 0 9 11"><path d="M.5 10.500h8v-6L4.500 .5.5 4.500z" fill="#fff" stroke="#c4c4c4"/><path d="M2.500 6.500h4" stroke="#b0b0b0"/></svg>
<div class="abs" style="left:280px;top:372.500px;width:311px;height:10.500px;background:#fb0207;border-radius:5px"></div>
<div class="abs" style="left:73px;top:483px;width:10px;height:10px;border-radius:5px;background:#f0a30a"></div>
<div class="abs" style="left:75.500px;top:494px;width:5px;height:3px;border-top:1px solid #555;border-bottom:1px solid #555"></div>
<svg class="abs" style="left:1352px;top:8px" width="10" height="10" viewBox="0 0 10 10"><circle cx="5" cy="5" r="5" fill="#c74a4a"/><rect x="4.200" y="1.800" width="1.600" height="4" fill="#fff"/><rect x="4.200" y="6.800" width="1.600" height="1.500" fill="#fff"/></svg>
</div>
<div class="abs" style="left:0;top:684px;width:1367px;height:23px;background:#f2f2f2;border-top:1px solid #d9d9d9"></div>
</div>
<svg class="abs" style="left:0;top:0" width="1766" height="919" viewBox="0 0 1766 919"><path d="M367 223.800L280 286" stroke="#fb0207" stroke-width="2.800" stroke-linecap="round" fill="none"/><path d="M270 293.300l8.600-12 6 7.200z" fill="#fb0207"/><path d="M1171.500 297.300L1016 434" stroke="#fb0207" stroke-width="2.700" stroke-linecap="round" fill="none"/><path d="M1006.800 441.500l6.200-12.300 7.700 7.400z" fill="#fb0207"/></svg>
<div class="abs" style="left:17px;top:732px;width:1749px;height:28px;background:#f2f2f2;border-top:1px solid #d1d1d1;border-bottom:1px solid #d1d1d1"></div>
<span class="t" style="left:24px;top:737px">Terminal:</span>
<span class="t" style="left:91px;top:737px">Local</span>
<svg class="abs" style="left:126px;top:743px" width="8" height="8" viewBox="0 0 8 8"><path d="M.5 .5l7 7M7.500 .5l-7 7" stroke="#b0b0b0" stroke-width="1"/></svg>
<div class="abs" style="left:79px;top:756px;width:66px;height:3px;background:#a3abbd;border-radius:1.500px"></div>
<svg class="abs" style="left:154px;top:740px" width="12" height="12" viewBox="0 0 12 12"><path d="M6 1v10M1 6h10" stroke="#6e6e6e" stroke-width="1.700"/></svg>
<svg class="abs" style="left:179px;top:742px" width="13" height="8" viewBox="0 0 13 8"><path d="M1 1l5.500 5.500L12 1" fill="none" stroke="#6e6e6e" stroke-width="1.800"/></svg>
<span class="code" style="left:21px;top:761px;color:#1a1a1a">Windows PowerShell</span>
<span class="code" style="left:21px;top:783px;color:#1a1a1a">Copyright (C) Microsoft Corporation. All rights reserved.</span>
<span class="code" style="left:21px;top:827px;color:#1a1a1a">Try the new cross-platform PowerShell <span style="color:#2470d6;text-decoration:underline;text-underline-offset:3px">https://aka.ms/pscore6</span></span>
<span class="code" style="left:21px;top:871px;color:#1a1a1a">PS C:\Users\admin\Desktop\Zigzagbus Flutter App Code v1.0&gt; </span>
<div class="abs" style="left:493px;top:870px;width:9px;height:23px;border:1px solid #000"></div></body></html>
